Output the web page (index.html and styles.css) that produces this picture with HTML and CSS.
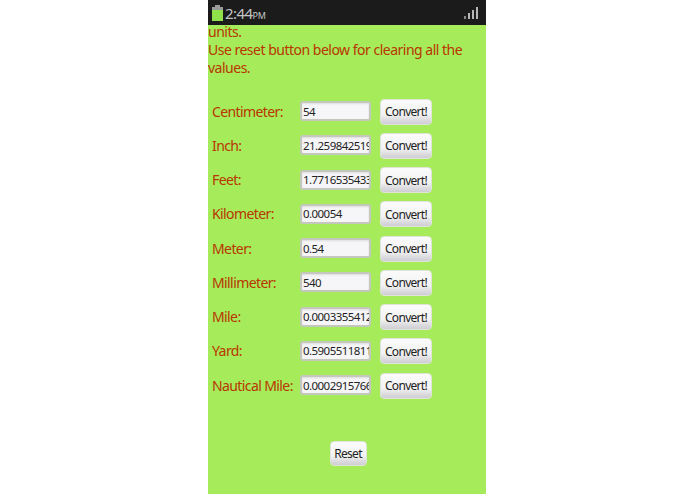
FILE: index.html
```html
<!DOCTYPE html>
<html>
<head>
	<title>Unit Converter</title>
	<meta charset="utf-8">
	<link rel="stylesheet" href="styles.css">
</head>
<body>
<div id="phone">
	<div class="statusbar">
		<svg class="battery" width="11" height="16" viewBox="0 0 11 16">
			<rect x="3" y="0" width="5" height="2" fill="#9a9a9a"/>
			<rect x="0" y="2" width="11" height="3" fill="#9a9a9a"/>
			<rect x="0" y="5" width="11" height="11" fill="#8fe04a"/>
		</svg>
		<span class="clock">2:44<small>PM</small></span>
		<svg class="signal" width="14" height="12" viewBox="0 0 14 12">
			<rect x="0" y="9" width="2" height="3" fill="#8a8a8a"/>
			<rect x="4" y="6" width="2" height="6" fill="#b5b5b5"/>
			<rect x="8" y="3" width="2" height="9" fill="#b5b5b5"/>
			<rect x="12" y="0" width="2" height="12" fill="#b5b5b5"/>
		</svg>
	</div>
	<div class="content">
		<p class="intro">units.<br>Use reset button below for clearing all the values.</p>
		<div class="rows">
			<div class="row"><label>Centimeter:</label><input type="text" value="54"><button>Convert!</button></div>
			<div class="row"><label>Inch:</label><input type="text" value="21.25984251968504"><button>Convert!</button></div>
			<div class="row"><label>Feet:</label><input type="text" value="1.7716535433070866"><button>Convert!</button></div>
			<div class="row"><label>Kilometer:</label><input type="text" value="0.00054"><button>Convert!</button></div>
			<div class="row"><label>Meter:</label><input type="text" value="0.54"><button>Convert!</button></div>
			<div class="row"><label>Millimeter:</label><input type="text" value="540"><button>Convert!</button></div>
			<div class="row"><label>Mile:</label><input type="text" value="0.00033554123"><button>Convert!</button></div>
			<div class="row"><label>Yard:</label><input type="text" value="0.59055118110"><button>Convert!</button></div>
			<div class="row"><label>Nautical Mile:</label><input type="text" value="0.00029157667"><button>Convert!</button></div>
		</div>
		<div class="reset_row"><button class="reset">Reset</button></div>
	</div>
</div>
</body>
</html>
```

FILE: styles.css
```css
body {
	margin: 0;
	height: 494px;
	background: #fff;
	display: flex;
	justify-content: center;
	overflow: hidden;
	font-family: "Noto Sans", "Open Sans", sans-serif;
}
#phone {
	width: 278px;
	height: 494px;
	margin-right: 1px;
	background: #a6eb5a;
	display: flex;
	flex-direction: column;
	overflow: hidden;
}
.statusbar {
	height: 25px;
	flex: none;
	background: #1b1b1b;
	display: flex;
	align-items: center;
	padding: 0 8px 0 4px;
	color: #c4c4c4;
}
.battery {
	margin-right: 2px;
}
.clock {
	font-size: 15px;
	letter-spacing: -0.6px;
}
.clock small {
	font-size: 9px;
	letter-spacing: 0;
}
.signal {
	margin-left: auto;
}
.content {
	flex: 1;
}
.intro {
	margin: -2px 0 0;
	font-size: 14px;
	line-height: 18px;
	color: #b83600;
	letter-spacing: -0.5px;
}
.rows {
	margin-top: 17px;
	display: flex;
	flex-direction: column;
}
.row {
	height: 34.25px;
	display: flex;
	align-items: center;
	padding-left: 4px;
}
.row label {
	width: 88px;
	font-size: 14px;
	color: #b83600;
	letter-spacing: -0.6px;
	white-space: nowrap;
}
.row input {
	width: 71px;
	height: 20px;
	box-sizing: border-box;
	padding: 0 0 0 1px;
	border: 2px solid #c3c7be;
	border-radius: 3px;
	background: #f6f6f8;
	box-shadow: inset 0 1px 2px #ddd;
	font-family: inherit;
	font-size: 11.5px;
	letter-spacing: -0.55px;
	color: #222;
	outline: none;
}
button {
	height: 26px;
	padding: 0;
	border: 1px solid #dfe3da;
	border-radius: 4px;
	background: linear-gradient(#fbfbfb, #f2f2f2 60%, #cdcdd3);
	font-family: inherit;
	font-size: 12px;
	letter-spacing: -0.7px;
	color: #222;
}
.row button {
	width: 52px;
	margin-left: 9px;
	margin-top: 1px;
}
.reset_row {
	margin-top: 39px;
	display: flex;
	justify-content: center;
	padding-left: 2px;
}
.reset {
	width: 37px;
	height: 25px;
}
```
